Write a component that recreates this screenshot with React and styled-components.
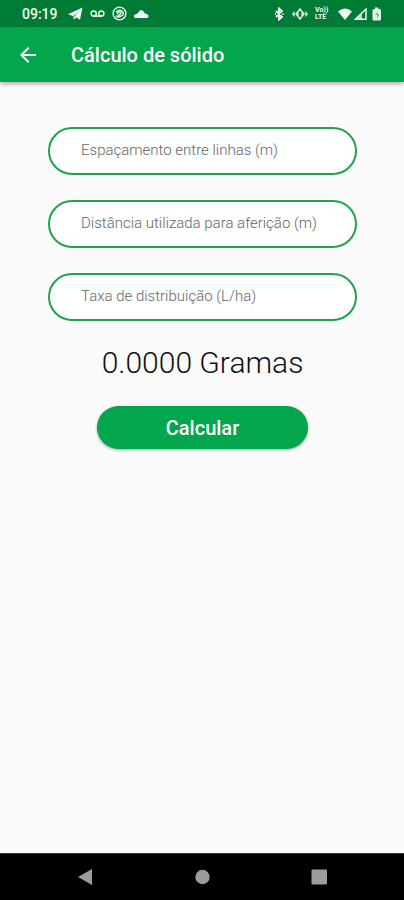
import React, { useState } from "react";
import styled, { createGlobalStyle } from "styled-components";

const GlobalStyle = createGlobalStyle`
  * { box-sizing: border-box; }
  body { margin: 0; background: #fafafa; font-family: Roboto, sans-serif; }
`;

const Screen = styled.div`
  display: flex;
  flex-direction: column;
  min-height: 100vh;
  background: #fafafa;
`;

const StatusBar = styled.div`
  display: flex;
  align-items: center;
  justify-content: space-between;
  height: 27px;
  padding: 0 21px 0 22px;
  background: #007b36;
  color: #f2fbf5;
`;

const StatusGroup = styled.div`
  display: flex;
  align-items: center;
  gap: ${({ $gap }) => $gap}px;
`;

const Clock = styled.time`
  margin-right: 3px;
  font-size: 14px;
  font-weight: 500;
  line-height: 16px;
`;

const Glyph = styled.svg`
  display: block;
  flex: none;
`;

const Network = styled.span`
  display: flex;
  flex-direction: column;
  width: 16px;
  margin-right: 4px;
  font-size: 7px;
  font-weight: 700;
  line-height: 7px;
`;

const AppBar = styled.header`
  display: flex;
  align-items: center;
  gap: 31px;
  height: 55px;
  padding: 0 16px;
  background: #03a64c;
  color: #fff;
  box-shadow: 0 2px 4px rgba(0, 0, 0, 0.3);
`;

const BackButton = styled.button`
  display: flex;
  padding: 0;
  border: 0;
  background: none;
  color: inherit;
  cursor: pointer;
`;

const Title = styled.h1`
  margin: 0;
  font-size: 20px;
  font-weight: 500;
  line-height: 24px;
`;

const Form = styled.form`
  display: flex;
  flex: 1;
  flex-direction: column;
  align-items: center;
  padding: 45px 47px 24px 48px;
`;

const Fields = styled.div`
  display: flex;
  flex-direction: column;
  gap: 25px;
  width: 100%;
`;

const Field = styled.input`
  width: 100%;
  height: 48px;
  padding: 0 31px 2px;
  border: 2px solid #20a34b;
  border-radius: 24px;
  background: #fff;
  color: #222;
  font: 300 15px/20px Roboto, sans-serif;
  outline: none;
  &::placeholder { color: #666; opacity: 1; }
`;

const Result = styled.output`
  margin: 24px 0 25px;
  color: #111;
  font-size: 30px;
  font-weight: 300;
  line-height: 36px;
`;

const SubmitButton = styled.button`
  width: 68%;
  height: 43px;
  padding: 0;
  border: 0;
  border-radius: 22px;
  background: #03a64c;
  color: #fff;
  font: 500 20px/24px Roboto, sans-serif;
  box-shadow: 0 1px 3px rgba(0, 0, 0, 0.35);
  cursor: pointer;
`;

const NavBar = styled.nav`
  display: flex;
  align-items: center;
  justify-content: space-between;
  height: 47px;
  padding: 0 73px;
  border-top: 1px solid #333;
  background: #000;
`;

const NavButton = styled.button`
  display: flex;
  padding: 0;
  border: 0;
  background: none;
  color: #9c9c9c;
  cursor: pointer;
`;

const fields = [
  { id: "spacing", label: "Espaçamento entre linhas (m)" },
  { id: "distance", label: "Distância utilizada para aferição (m)" },
  { id: "rate", label: "Taxa de distribuição (L/ha)" },
];

function StatusIcons() {
  return (
    <StatusGroup $gap={7}>
      <Glyph width="11" height="14" viewBox="0 0 11 14" fill="none" stroke="currentColor" strokeWidth="1.8">
        <path d="M2 4l6 6-3 2.5v-11L8 4l-6 6M1 7h1M8.5 7h1" />
      </Glyph>
      <Glyph width="16" height="14" viewBox="0 0 16 14" fill="currentColor">
        <path d="M0 7l2.6-3.4v6.8zM16 7l-2.6-3.4v6.8z" opacity=".85" />
        <path fillRule="evenodd" d="M8 .8l5 6.2-5 6.2L3 7zM6.7 4.2v5.6h2.6V4.2z" opacity=".85" />
      </Glyph>
      <Network><span>Vo))</span><span>LTE</span></Network>
    </StatusGroup>
  );
}

function SignalIcons() {
  return (
    <StatusGroup $gap={2}>
      <Glyph width="14" height="12" viewBox="0 0 14 12" fill="currentColor">
        <path d="M0 3.4Q7-2.4 14 3.4L7 12z" />
      </Glyph>
      <Glyph width="13" height="12" viewBox="0 0 13 12" fill="none" stroke="currentColor">
        <path d="M1.3 11.2L12 1v10.2z" strokeWidth="1.4" />
        <path d="M2 11l6-6v6z" fill="currentColor" stroke="none" opacity=".75" />
      </Glyph>
      <Glyph width="14" height="14" viewBox="0 0 14 14">
        <path d="M6 .5h3.4V2h1.1q1.5 0 1.5 1.5v8.8q0 1.3-1.3 1.3H4.8q-1.3 0-1.3-1.3V3.500Q3.500 2 5 2h1z" fill="currentColor" opacity=".95" />
        <path d="M9 4L6 8h2v4l2.500-5H8.500z" fill="#007b36" opacity=".5" />
      </Glyph>
    </StatusGroup>
  );
}

export default function App() {
  const [values, setValues] = useState({ spacing: "", distance: "", rate: "" });
  const [grams, setGrams] = useState(0);

  const calculate = (event) => {
    event.preventDefault();
    const [spacing, distance, rate] = fields.map(({ id }) => Number(values[id].replace(",", ".")) || 0);
    setGrams((spacing * distance * rate) / 10);
  };

  return (
    <>
      <GlobalStyle />
      <Screen>
        <StatusBar>
          <StatusGroup $gap={7}>
            <Clock>09:19</Clock>
            <Glyph width="15" height="13" viewBox="0 0 15 13" fill="currentColor">
              <path d="M0 7.200L14.500.5 12 12.800 8.500 10.500 5.800 12.600 4.800 9z" />
              <path d="M5 9l5-4-3.400 4.800-.5 2z" fill="#007b36" opacity=".6" />
            </Glyph>
            <Glyph width="15" height="12" viewBox="0 0 15 12" fill="none" stroke="currentColor" strokeWidth="1.500">
              <circle cx="3.700" cy="5.500" r="2.600" />
              <circle cx="11.300" cy="5.500" r="2.600" />
              <path d="M3.700 8.100h7.600" />
            </Glyph>
            <Glyph width="15" height="15" viewBox="0 0 15 15" fill="none" stroke="currentColor" strokeWidth="1.400">
              <circle cx="7.500" cy="7.500" r="6.400" />
              <path d="M4 6.200Q7.500 2.600 10.400 5.500T8.300 10.400M4 9.700q2 2.100 4.300.7M5.200 8.100Q7 5 8.500 6.300t-.8 2.200L5 11" />
            </Glyph>
            <Glyph width="15" height="10" viewBox="0 0 15 10" fill="currentColor">
              <path d="M1.800 9A1.800 1.800 0 0 1 1.600 5.400L4 4Q5.500 1 7.300 1T10.500 4l2.700 1.300A1.900 1.900 0 0 1 13 9z" />
            </Glyph>
          </StatusGroup>
          <StatusGroup $gap={3}>
            <StatusIcons />
            <SignalIcons />
          </StatusGroup>
        </StatusBar>

        <AppBar>
          <BackButton type="button" aria-label="Voltar">
            <Glyph width="24" height="24" viewBox="0 0 24 24" fill="currentColor">
              <path d="M20 11H7.830l5.590-5.590L12 4l-8 8 8 8 1.410-1.410L7.830 13H20z" />
            </Glyph>
          </BackButton>
          <Title>Cálculo de sólido</Title>
        </AppBar>

        <Form onSubmit={calculate}>
          <Fields>
            {fields.map(({ id, label }) => (
              <Field
                key={id}
                id={id}
                aria-label={label}
                placeholder={label}
                inputMode="decimal"
                value={values[id]}
                onChange={(event) => setValues({ ...values, [id]: event.target.value })}
              />
            ))}
          </Fields>
          <Result htmlFor="spacing distance rate">{grams.toFixed(4)} Gramas</Result>
          <SubmitButton type="submit">Calcular</SubmitButton>
        </Form>

        <NavBar aria-label="Sistema">
          <NavButton type="button" aria-label="Retornar">
            <Glyph width="24" height="24" viewBox="0 0 24 24" fill="currentColor">
              <path d="M5 12L19 4v16z" />
            </Glyph>
          </NavButton>
          <NavButton type="button" aria-label="Início">
            <Glyph width="24" height="24" viewBox="0 0 24 24" fill="currentColor">
              <circle cx="12.500" cy="12" r="7.200" />
            </Glyph>
          </NavButton>
          <NavButton type="button" aria-label="Recentes">
            <Glyph width="24" height="24" viewBox="0 0 24 24" fill="currentColor">
              <rect x="4.500" y="4.500" width="15.500" height="15" rx="1" />
            </Glyph>
          </NavButton>
        </NavBar>
      </Screen>
    </>
  );
}
